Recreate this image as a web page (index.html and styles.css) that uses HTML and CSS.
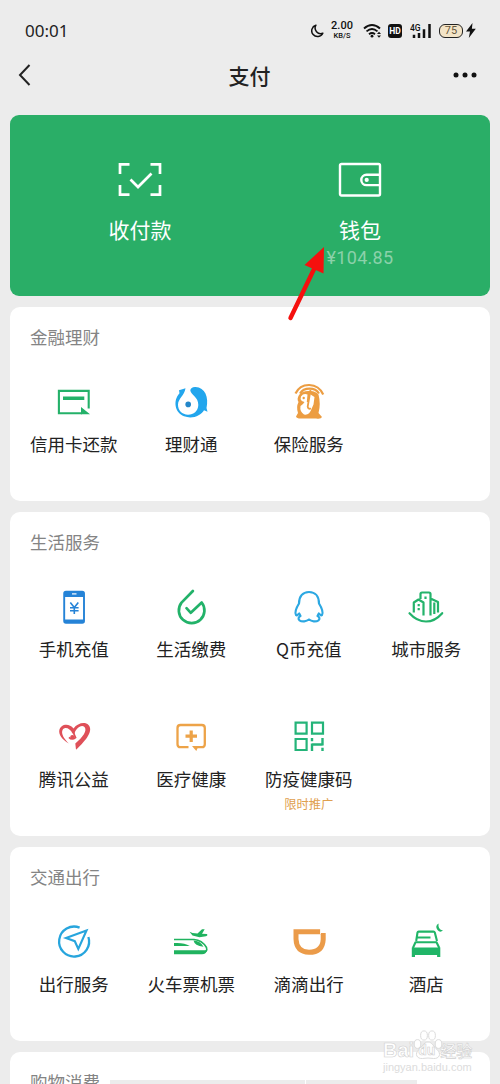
FILE: index.html
```html
<!DOCTYPE html>
<html lang="zh-CN">
<head>
<meta charset="utf-8">
<title>支付</title>
<link rel="stylesheet" href="styles.css">
</head>
<body>
<div class="screen">
  <div class="status">
    <span class="clock">00:01</span>
    <div class="indicators">
      <svg class="moon" width="13" height="14" viewBox="0 0 12 14"><path d="M4.400 1.200A5.800 5.800 0 1 0 11.300 9.200A5.600 5.600 0 0 1 4.400 1.200Z" fill="none" stroke="#111" stroke-width="1.500" stroke-linejoin="round"/></svg>
      <div class="rate"><b>2.00</b><small>KB/S</small></div>
      <svg class="wifi" width="20" height="16" viewBox="0 0 20 16"><g fill="none" stroke="#111" stroke-width="1.900"><path d="M1 5.500Q9 -1.500 17 5.500"/><path d="M3.500 8.400Q9 3.600 14.500 8.400"/><path d="M6 11.200Q9 8.800 12 11.200"/></g><circle cx="9" cy="13.200" r="1.400" fill="#111"/><path d="M14 11l2-2.300 2 2.300zM14 12.500l2 2.300 2-2.300z" fill="#111"/></svg>
      <span class="hd">HD</span>
      <svg class="signal" width="22" height="16" viewBox="0 0 22 16"><text x="0" y="7.500" class="net">4G</text><path d="M4 11.800v3.200M9 10v5M14 6.300v8.700M19.500 1v14" stroke="#111" stroke-width="2.500"/></svg>
      <span class="battery">75</span>
      <svg class="bolt" width="10" height="15" viewBox="0 0 10 15"><path d="M6.500 0L0 8.600h4L2.800 15l7-9.300H5.900z" fill="#111"/></svg>
    </div>
  </div>
  <header class="nav">
    <svg width="14" height="24" viewBox="0 0 14 24"><path d="M12.500 2L3 12l9.500 10" fill="none" stroke="#222" stroke-width="2"/></svg>
    <h1>支付</h1>
    <svg width="24" height="6" viewBox="0 0 24 6" fill="#111"><circle cx="3" cy="3" r="2.500"/><circle cx="12" cy="3" r="2.500"/><circle cx="21" cy="3" r="2.500"/></svg>
  </header>

  <main class="cards">
    <section class="hero">
      <div class="hero-item">
        <svg width="44" height="36" viewBox="0 0 44 36" fill="none" stroke="#fff" stroke-width="2.700"><path d="M2 12V2.300h9.500M32.500 2.300H42V12M42 23v9.700h-9.500M11.500 32.700H2V23"/><path d="M12.500 17.500l7.500 7.500L33.500 11.500"/></svg>
        <span>收付款</span>
      </div>
      <div class="hero-item">
        <svg width="44" height="36" viewBox="0 0 44 36" fill="none" stroke="#fff" stroke-width="2.400"><rect x="2" y="2" width="40" height="31.500" rx="1.500"/><path d="M42 12.700H28.500a5.200 5.200 0 0 0 0 10.400H42"/><circle cx="28.700" cy="17.900" r="2.100" fill="#fff" stroke="none"/></svg>
        <span>钱包</span>
        <em>¥104.85</em>
      </div>
      <svg class="pointer" width="42" height="78" viewBox="0 0 42 78"><path d="M4.500 73L29 22" stroke="#f5100e" stroke-width="4.400" stroke-linecap="round"/><path d="M38 2L18.500 20l19 8.500z" fill="#f5100e"/></svg>
    </section>

    <section class="card">
      <h2>金融理财</h2>
      <div class="grid">
        <div class="item">
          <svg class="icon" viewBox="0 0 44 44"><path d="M36.700 28.500V10.900H6.900v22.300H30" fill="none" stroke="#24b169" stroke-width="2.100"/><path d="M11 16.500h21.300v3.600H11zM29 27l9 7.300h-9z" fill="#24b169"/></svg>
          <span>信用卡还款</span>
        </div>
        <div class="item">
          <svg class="icon" viewBox="0 0 44 44"><path d="M16.500 8.300L10 10.300L10.500 13.200C3.500 21 6 32.500 15 36.300C23.500 39.500 32 35.500 35 30.200L38.500 31.700L37.500 28C40 17 36 7.500 26.500 7C23.500 6.800 21.600 8.200 21.300 10.300C21.500 14.500 29.500 17 29.300 25C29 31.300 24.500 34.800 19 34.700C13 34.500 8.800 30.300 9 24.500C9.300 18.500 15.500 15.500 16.500 8.300Z" fill="#22a6ed"/><circle cx="19.200" cy="24.400" r="2.800" fill="#2386c9"/></svg>
          <span>理财通</span>
        </div>
        <div class="item">
          <svg class="icon" viewBox="0 0 44 44"><path d="M8.500 13.500C14 2 30.500 2 36.200 14.500M13 13.500C17 7 28 7 32 13.500" fill="none" stroke="#ec9d42" stroke-width="2.200"/><path d="M12 15Q9.500 19 11.500 22Q9 27 11 33L9 36.500Q10 39 15 38.500H29Q34 39.500 35 37L31.500 33Q34 24 31.500 14.500Q28 10.500 22.500 11Q15.500 10.500 12 15Z" fill="#ec9d42"/><path d="M14 16.500Q16.500 13 20.500 14.500L19.800 22L21.200 22L22.800 14L27.500 17L26.500 24.500L24.500 29Q22.500 35.500 17 34.500Q12.500 31.500 13.500 26Q16.500 24 17.500 22Q12.500 21 14 16.500Z" fill="#fff"/><path d="M23.500 10L20.700 26.500Q21 29.500 24 28.500" fill="none" stroke="#ec9d42" stroke-width="1.800"/><circle cx="16.700" cy="18" r="1.200" fill="#ec9d42"/></svg>
          <span>保险服务</span>
        </div>
      </div>
    </section>

    <section class="card">
      <h2>生活服务</h2>
      <div class="grid">
        <div class="item">
          <svg class="icon" viewBox="0 0 44 44"><rect x="12.200" y="6.700" width="19.800" height="31" rx="1.800" fill="none" stroke="#2583d7" stroke-width="1.900"/><path d="M12 7h20v5H12zM12 34.400h20V38H12z" fill="#2583d7"/><path d="M20 8.900h4.500" stroke="#fff" stroke-width="1.200"/><path d="M18.300 17.500l4 5 4-5M22.300 22v7M18 22.800h8.600M18 25.800h8.600" fill="none" stroke="#2583d7" stroke-width="1.600"/></svg>
          <span>手机充值</span>
        </div>
        <div class="item">
          <svg class="icon" viewBox="0 0 44 44"><path d="M23.900 6L12.500 17.600A12.800 12.800 0 1 0 32.700 17.500L21.800 27.800L17.500 23.200" fill="none" stroke="#22b269" stroke-width="2.700" stroke-linecap="round" stroke-linejoin="round"/></svg>
          <span>生活缴费</span>
        </div>
        <div class="item">
          <svg class="icon" viewBox="0 0 44 44"><path d="M22 7C15.500 7 12 11.500 12 18.500C9.500 22.500 7.300 27 9 30C10 31.200 11 29.500 12.200 28.500L13.500 31C11.500 32 10.800 34 12.500 35.300C15 37 19.500 36.500 22 34.500C24.500 36.500 29 37 31.500 35.300C33.200 34 32.500 32 30.500 31L31.800 28.500C33 29.500 34 31.200 35 30C36.700 27 34.500 22.500 32 18.500C32 11.500 28.500 7 22 7Z" fill="none" stroke="#2ca8e2" stroke-width="2.200" stroke-linejoin="round"/></svg>
          <span>Q币充值</span>
        </div>
        <div class="item">
          <svg class="icon" viewBox="0 0 44 44" fill="none" stroke="#24b36b" stroke-width="2.200" stroke-linejoin="round"><path d="M5.500 28.200Q13 36.500 22 36.500T38.200 28.200" stroke-linecap="round"/><path d="M9.800 27.500V17.500L14.500 14.500L19.500 17.500V30.500M16.500 14V9Q16.500 7.500 18 7.500H25Q26.500 7.500 26.500 9V30.500M26.500 13.500L34 17V27.500M30.300 17.500V29"/><path d="M21.500 11.500v2.400M14.700 19v2.200M14.700 23v2.200"/></svg>
          <span>城市服务</span>
        </div>
        <div class="item">
          <svg class="icon" viewBox="0 0 44 44"><path d="M16.800 28.500C10 24.500 6.500 19.500 7.300 15.300C8.500 9 17 7.500 21.500 13.500C25.500 8 33 6.500 36.500 10C41.500 15.500 35 24.500 24 34.800L23.300 28.500C31 22 35.500 15.500 32.500 12C29 9 23.500 14 22.300 19L20.500 18.500C18 13 13 11.500 10.800 14.500C8.500 18.500 12 23.500 16.800 28.500Z" fill="#df5059"/><path d="M17 22.300Q20 25.500 23.500 22.500Q22 20 21.500 17" fill="none" stroke="#df5059" stroke-width="1.700"/><circle cx="20.300" cy="22" r="2.100" fill="#df5059"/></svg>
          <span>腾讯公益</span>
        </div>
        <div class="item">
          <svg class="icon" viewBox="0 0 44 44" fill="none" stroke="#eda348" stroke-width="2.300"><path d="M19.500 32.200H11.500Q8.500 32.200 8.500 29.200V13Q8.500 10 11.500 10H32.800Q35.800 10 35.800 13V29.200Q35.800 32.200 32.800 32.200H26"/><path d="M22.200 15.500v11.500M16.500 21.200H28" stroke-width="3.200"/><path d="M23 31.100h6.500l-2.200 5z" fill="#eda348" stroke="none"/></svg>
          <span>医疗健康</span>
        </div>
        <div class="item">
          <svg class="icon" viewBox="0 0 44 44" fill="none" stroke="#24b479" stroke-width="2.200"><path d="M8.600 7.700h11v11h-11zM25 7.700h11v11H25zM8.600 24h11v11h-11z"/><path d="M25 23v3.200M25 29.500H35.500M25 28.500V36M35.500 23v7.500M35.500 32.800V36" stroke-width="2.400"/></svg>
          <span>防疫健康码</span>
          <small>限时推广</small>
        </div>
      </div>
    </section>

    <section class="card">
      <h2>交通出行</h2>
      <div class="grid">
        <div class="item">
          <svg class="icon" viewBox="0 0 44 44" fill="none" stroke="#27a5dd" stroke-width="2.300"><path d="M27.600 7.600A15 15 0 1 0 36.400 17"/><path d="M34.500 10.500L14 18L22.800 21.200L26.300 29Z" stroke-width="2.100"/></svg>
          <span>出行服务</span>
        </div>
        <div class="item">
          <svg class="icon" viewBox="0 0 44 44"><path d="M5 19.500H25Q33 20 37.500 27.500Q39 32 33 33H5" fill="none" stroke="#20b35f" stroke-width="1.600"/><path d="M5 30.300H37.500Q37.500 34.300 33 34.300H5zM5 23Q15 22.300 20.800 26H5zM24.500 20.500Q31 20.500 34.500 26.800Q25.500 25.800 24.500 20.500Z" fill="#20b35f"/><path d="M20.500 11.800l3 1.300 5 .5 4.500-4.300h2.700l-2.700 4.400 4.800.2q1.500 1.200-.8 2.300l-6.500 1-7-1.800Z" fill="#20b35f"/></svg>
          <span>火车票机票</span>
        </div>
        <div class="item">
          <svg class="icon" viewBox="0 0 44 44"><path d="M33.500 11.700H9V19Q9.500 32 22 32.300Q35.500 32.300 36.200 19.500V13" fill="none" stroke="#eb9b49" stroke-width="5"/><path d="M33.500 14V9" stroke="#fff" stroke-width=".8"/></svg>
          <span>滴滴出行</span>
        </div>
        <div class="item">
          <svg class="icon" viewBox="0 0 44 44"><path d="M12.200 21L13.500 12.500Q13.700 11.600 14.700 11.600H29.500Q30.500 11.600 30.800 12.500L33 21M12.500 17.500H26.500M35.300 28L32.500 22.300H11.500L8.900 28" fill="none" stroke="#20b567" stroke-width="2.100" stroke-linejoin="round"/><path d="M7.800 27.500h28.500V37h-3.200v-2H11v2H7.800z" fill="#20b567"/><path d="M34.600 3.500Q30.500 6 33.500 10Q36 13 39 10.500Q33.500 9.500 34.600 3.500Z" fill="#20b567"/></svg>
          <span>酒店</span>
        </div>
      </div>
    </section>

    <section class="card card-next">
      <h2>购物消费</h2>
    </section>
  </main>

  <div class="bottom-line"><span></span><span></span></div>

  <div class="watermark">
    <svg class="paw" width="30" height="30" viewBox="0 0 30 30" fill="#fff" stroke="#dcdcdc"><ellipse cx="4.500" cy="14" rx="3.300" ry="4.400"/><ellipse cx="11" cy="5.500" rx="3.400" ry="4.600"/><ellipse cx="19" cy="5.500" rx="3.400" ry="4.600"/><ellipse cx="25.500" cy="14" rx="3.300" ry="4.400"/><path d="M15 12C10.500 12 9.500 17 6 19.500C1 24 4 29 9.500 28.500Q15 27.500 20.500 28.500C26 29 29 24 24 19.500C20.500 17 19.500 12 15 12Z"/></svg>
    <div class="brand"><b>Bai</b><i>du</i><span>经验</span></div>
    <div class="site">jingyan.baidu.com</div>
  </div>
</div>
</body>
</html>
```

FILE: styles.css
```css
* { box-sizing: border-box; }

body {
  margin: 0;
  background: #ececec;
  color: #222;
  font-family: "Noto Sans CJK SC", "Noto Sans", sans-serif;
}

.screen {
  position: relative;
  height: 1084px;
  overflow: hidden;
}

.status {
  display: flex;
  justify-content: space-between;
  align-items: center;
  height: 60px;
  padding: 1px 24px 0 25px;
}

.clock {
  font: 17px/20px "Noto Sans", sans-serif;
}

.indicators {
  display: flex;
  align-items: center;
}

.rate {
  display: flex;
  flex-direction: column;
  align-items: center;
  width: 24px;
  margin: 0 9px 0 6px;
  color: #111;
  font-family: Roboto, sans-serif;
}

.rate b { font-size: 11px; line-height: 10px; font-weight: 500; }
.rate small { font-size: 7.500px; line-height: 9px; font-weight: 500; }

.hd {
  width: 14px;
  height: 14px;
  margin: 0 8px 0 5px;
  border-radius: 3px;
  background: #111;
  color: #fff;
  font: 700 8.500px/14px Roboto, sans-serif;
  text-align: center;
}

.net { font: 500 8.500px Roboto, sans-serif; fill: #111; }

.battery {
  width: 24px;
  height: 14px;
  margin: 0 3px 0 7px;
  border: 1.500px solid #222;
  border-radius: 6px;
  background: #f3e4c7;
  color: #66583f;
  font: 11px/12px Roboto, sans-serif;
  text-align: center;
}

.nav {
  display: flex;
  justify-content: space-between;
  align-items: center;
  height: 30px;
  padding: 0 23px 0 17px;
}

.nav h1 {
  margin: 0 0 0 15px;
  font-size: 21px;
  line-height: 30px;
  font-weight: 500;
}

.cards {
  display: flex;
  flex-direction: column;
  gap: 11px;
  padding: 25px 10px 0;
}

.hero {
  position: relative;
  display: grid;
  grid-template-columns: 1fr 1fr;
  height: 181px;
  padding: 47px 20px 0;
  border-radius: 9px;
  background: #2aae67;
  color: #fff;
}

.hero-item {
  display: flex;
  flex-direction: column;
  align-items: center;
}

.hero-item span {
  margin-top: 16px;
  font-size: 21px;
  line-height: 30px;
}

.hero-item em {
  margin-top: 2px;
  color: #8bd1aa;
  font: normal 18px/24px Roboto, sans-serif;
  letter-spacing: .3px;
}

.pointer {
  position: absolute;
  left: 276px;
  top: 130px;
  z-index: 1;
}

.card {
  padding: 0 5px 2px;
  border-radius: 10px;
  background: #fff;
}

.card h2 {
  height: 62px;
  margin: 0;
  padding-left: 15px;
  color: #848484;
  font-size: 17.500px;
  line-height: 60px;
  font-weight: 400;
}

.grid {
  display: grid;
  grid-template-columns: repeat(4, 1fr);
  grid-auto-rows: 130px;
}

.item {
  display: flex;
  flex-direction: column;
  align-items: center;
  padding-top: 11px;
  white-space: nowrap;
}

.item span {
  margin-top: 10px;
  font-size: 17.500px;
  line-height: 20px;
}

.item small {
  margin-top: 7px;
  color: #dfa04e;
  font-size: 12.300px;
  line-height: 16px;
}

.icon { width: 44px; height: 44px; }

.card-next { height: 60px; }

.bottom-line {
  position: absolute;
  left: 110px;
  bottom: 0;
  display: grid;
  grid-template-columns: 195px 111px;
  gap: 1px;
  height: 4px;
}

.bottom-line span { background: #ececec; }

.watermark {
  position: absolute;
  left: 383px;
  top: 1030px;
  width: 92px;
  color: #fff;
  -webkit-text-stroke: .6px #d0d0d0;
}

.paw {
  position: absolute;
  left: 30px;
  top: 0;
}

.brand {
  position: relative;
  display: flex;
  align-items: center;
  height: 25px;
  margin-top: 8px;
  font: 700 20px/25px "Liberation Sans", sans-serif;
}

.brand i { margin-left: 4px; width: 22px; font-size: 14px; font-style: normal; }
.brand span { font: 500 16px/25px "Noto Sans CJK SC", sans-serif; }

.site {
  margin-top: -3px;
  font: 11px/14px "Liberation Sans", sans-serif;
  -webkit-text-stroke: 0;
  color: #dcdcdc;
}
```
